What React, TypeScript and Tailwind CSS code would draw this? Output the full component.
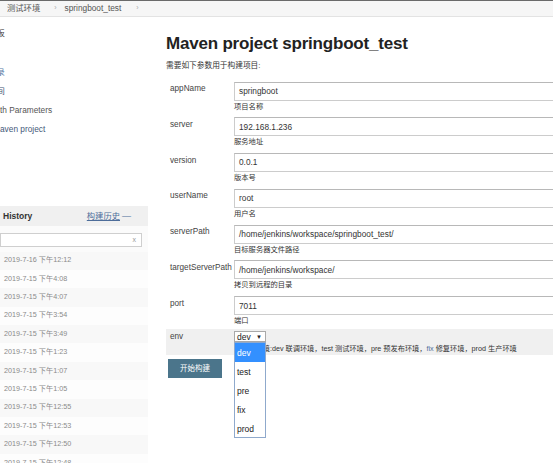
import React from "react";

const params = [
  { name: "appName", value: "springboot", desc: "项目名称" },
  { name: "server", value: "192.168.1.236", desc: "服务地址" },
  { name: "version", value: "0.0.1", desc: "版本号" },
  { name: "userName", value: "root", desc: "用户名" },
  { name: "serverPath", value: "/home/jenkins/workspace/springboot_test/", desc: "目标服务器文件路径" },
  { name: "targetServerPath", value: "/home/jenkins/workspace/", desc: "拷贝到远程的目录" },
  { name: "port", value: "7011", desc: "端口" },
];

const history = [
  "2019-7-16 下午12:12",
  "2019-7-15 下午4:08",
  "2019-7-15 下午4:07",
  "2019-7-15 下午3:54",
  "2019-7-15 下午3:49",
  "2019-7-15 下午1:23",
  "2019-7-15 下午1:07",
  "2019-7-15 下午1:05",
  "2019-7-15 下午12:55",
  "2019-7-15 下午12:53",
  "2019-7-15 下午12:50",
  "2019-7-15 下午12:48",
];

export default function App() {
  return (
    <div className="w-[553px] h-[463px] overflow-hidden bg-white font-['Liberation_Sans','Noto_Sans_CJK_SC',sans-serif] text-[#333]">
      {/* breadcrumb bar */}
      <div className="h-[17px] border-t border-t-[#6a6a6a] border-b border-b-[#e3e3e3] bg-[#f6f6f6] flex items-center text-[8.3px] text-[#555]">
        <span className="ml-[7px]">测试环境</span>
        <span className="ml-[14px] text-[#aaa] text-[7px]">›</span>
        <span className="ml-[8px]">springboot_test</span>
        <span className="ml-[15px] text-[#aaa] text-[7px]">›</span>
      </div>

      <div className="flex">
        {/* sidebar */}
        <div className="w-[148px] shrink-0 text-[8.3px]">
          <div className="mt-[7px] h-[19px] leading-[19px] overflow-hidden">
            <span className="-ml-[3.5px] text-[#444] inline-block">板</span>
          </div>
          <div className="h-[19.5px]" />
          <div className="h-[19px] leading-[19px] overflow-hidden">
            <span className="-ml-[3.5px] text-[#5a7aa6] inline-block">录</span>
          </div>
          <div className="h-[19px] leading-[19px] overflow-hidden">
            <span className="-ml-[3.5px] text-[#3f5472] inline-block">间</span>
          </div>
          <div className="h-[19px] leading-[19px] whitespace-nowrap text-[#555]">th Parameters</div>
          <div className="h-[19px] leading-[19px] whitespace-nowrap text-[#44597a]">aven project</div>

          <div className="mt-[67.5px] h-[20px] bg-[#f0f0f0] flex items-center justify-between pl-[3px] pr-[17px]">
            <span className="font-bold text-[8.5px] text-[#333]">History</span>
            <span className="flex items-center gap-[2px] text-[#4d6d9a]">
              <span className="underline text-[8.3px]">构建历史</span>
              <span className="text-[9px] leading-none">—</span>
            </span>
          </div>
          <div className="bg-[#fbfbfb] pt-[7px] pb-[4.5px] pr-[6px]">
            <div className="h-[14px] bg-white border border-[#cfcfcf] flex items-center justify-end pr-[5px]">
              <span className="text-[7px] text-[#999]">x</span>
            </div>
          </div>
          {history.map((h, i) => (
            <div
              key={i}
              className={`h-[18.4px] flex items-center pl-[4px] text-[7.2px] text-[#8a8a8a] whitespace-nowrap ${
                i % 2 === 0 ? "bg-[#f8f8f8]" : "bg-[#fdfdfd]"
              }`}
            >
              {h}
            </div>
          ))}
        </div>

        {/* main */}
        <div className="flex-1 pl-[18px] min-w-0">
          <h1 className="mt-[17px] text-[17px] leading-[20px] font-bold tracking-[-0.2px] text-[#222] whitespace-nowrap">
            Maven project springboot_test
          </h1>
          <div className="mt-[6px] text-[7.7px] leading-[12px] text-[#333]">需要如下参数用于构建项目:</div>

          <div className="mt-[9.5px]">
            {params.map((p, i) => (
              <div key={p.name} className={`flex ${i === params.length - 1 ? "pb-[1.5px]" : "pb-[4.8px]"}`}>
                <div className="w-[68px] shrink-0 pl-[4px] pt-[1.5px] text-[8.2px] leading-[12px] whitespace-nowrap text-[#444]">
                  {p.name}
                </div>
                <div className="flex-1 min-w-0">
                  <div className="h-[19px] w-[340px] border border-[#cccccc] border-t-[#b8b8b8] bg-white flex items-center pl-[4px] text-[8.3px] text-[#333] whitespace-nowrap">
                    {p.value}
                  </div>
                  <div className="h-[12px] leading-[12px] text-[7.3px] text-[#333] whitespace-nowrap">{p.desc}</div>
                </div>
              </div>
            ))}
          </div>

          {/* env row */}
          <div className="h-[26.5px] bg-[#f0f0f0] flex">
            <div className="w-[68px] shrink-0 pl-[4px] pt-[2px] text-[8.2px] leading-[12px] text-[#444]">env</div>
            <div className="flex-1 min-w-0 pt-[2.5px]">
              <div className="relative w-[32px]">
                <div className="h-[11px] w-[32px] border border-[#a9a9a9] bg-white flex items-center justify-between pl-[2px] pr-[3px] text-[8.5px] text-[#222]">
                  <span className="leading-none">dev</span>
                  <span className="text-[6px] leading-none">▼</span>
                </div>
                <div className="absolute left-0 top-full w-[32px] h-[96px] border border-[#8fa9cc] bg-white z-10 text-[8.5px] text-[#222]">
                  <div className="h-[19.2px] flex items-center pl-[2px] bg-[#3390ff] text-white">dev</div>
                  <div className="h-[19.2px] flex items-center pl-[2px]">test</div>
                  <div className="h-[19.2px] flex items-center pl-[2px]">pre</div>
                  <div className="h-[19.2px] flex items-center pl-[2px]">fix</div>
                  <div className="h-[19.2px] flex items-center pl-[2px]">prod</div>
                </div>
              </div>
              <div className="mt-[0.5px] h-[12px] leading-[12px] text-[7.2px] text-[#333] whitespace-nowrap">
                可选的环境:dev 联调环境，test 测试环境，pre 预发布环境，<span className="text-[#4d6d9a]">fix</span> 修复环境，prod 生产环境
              </div>
            </div>
          </div>

          <button className="mt-[4px] ml-[2px] w-[54px] h-[19px] bg-[#4b758b] text-white text-[7.5px] flex items-center justify-center">
            开始构建
          </button>
        </div>
      </div>
    </div>
  );
}
